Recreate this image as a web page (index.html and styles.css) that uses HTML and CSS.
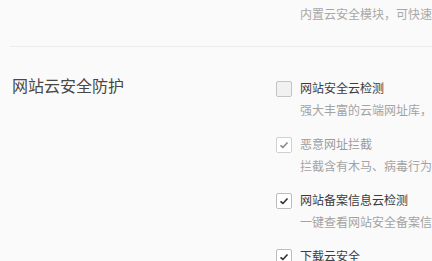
FILE: index.html
```html
<!DOCTYPE html>
<html lang="zh">
<head>
<meta charset="utf-8">
<link rel="stylesheet" href="styles.css">
</head>
<body>
<div class="page">
  <div class="top">
    <div class="desc top-desc">内置云安全模块，可快速识别恶意网址和下载文件</div>
  </div>
  <div class="divider"></div>
  <div class="section">
    <div class="heading">网站云安全防护</div>
    <div class="options">
      <div class="option">
        <div class="row">
          <span class="box"></span>
          <span class="title">网站安全云检测</span>
        </div>
        <div class="desc">强大丰富的云端网址库，实时检测网站安全</div>
      </div>
      <div class="option disabled">
        <div class="row">
          <span class="box checked"><svg viewBox="0 0 16 16" width="14" height="14"><path d="M4 8.3 L6.8 10.8 L12 5.2" fill="none" stroke="currentColor" stroke-width="1.9"/></svg></span>
          <span class="title">恶意网址拦截</span>
        </div>
        <div class="desc">拦截含有木马、病毒行为的恶意网址</div>
      </div>
      <div class="option">
        <div class="row">
          <span class="box checked"><svg viewBox="0 0 16 16" width="14" height="14"><path d="M4 8.3 L6.8 10.8 L12 5.2" fill="none" stroke="currentColor" stroke-width="1.9"/></svg></span>
          <span class="title">网站备案信息云检测</span>
        </div>
        <div class="desc">一键查看网站安全备案信息</div>
      </div>
      <div class="option">
        <div class="row">
          <span class="box checked"><svg viewBox="0 0 16 16" width="14" height="14"><path d="M4 8.3 L6.8 10.8 L12 5.2" fill="none" stroke="currentColor" stroke-width="1.9"/></svg></span>
          <span class="title">下载云安全</span>
        </div>
        <div class="desc">下载文件时自动检测安全性</div>
      </div>
    </div>
  </div>
</div>
</body>
</html>
```

FILE: styles.css
```css
html, body {
  margin: 0;
  padding: 0;
  background: #fafafa;
  overflow: hidden;
}
body {
  width: 432px;
  height: 261px;
  font-family: "Noto Sans CJK SC", "Noto Sans", sans-serif;
  white-space: nowrap;
}
.page {
  width: 432px;
  height: 261px;
  overflow: hidden;
}
.top {
  height: 46px;
  padding-left: 300px;
  padding-top: 5px;
  box-sizing: border-box;
}
.divider {
  margin-left: 10px;
  border-top: 1px solid #ececec;
}
.section {
  display: flex;
  padding-top: 27px;
  padding-left: 12px;
}
.heading {
  width: 264px;
  flex: none;
  font-size: 16px;
  line-height: 22px;
  color: #484848;
}
.options {
  padding-top: 6px;
  display: flex;
  flex-direction: column;
  gap: 17px;
}
.row {
  display: flex;
  align-items: center;
  gap: 8px;
  height: 16px;
}
.box {
  width: 14px;
  height: 14px;
  border: 1px solid #c4c4c4;
  border-radius: 2px;
  background: #f1f1f1;
  display: flex;
  align-items: center;
  justify-content: center;
  color: #333;
  flex: none;
  margin-top: 1px;
}
.box.checked {
  background: #fff;
  border-color: #bdbdbd;
}
.title {
  font-size: 12px;
  line-height: 16px;
  color: #3c3c3c;
}
.desc {
  font-size: 12px;
  line-height: 18px;
  color: #a3a3a3;
  margin-top: 5px;
  padding-left: 24px;
}
.top-desc {
  margin-top: 0;
  padding-left: 0;
  color: #a8a8a8;
}
.disabled .title {
  color: #9a9a9a;
}
.disabled .box {
  color: #8a8a8a;
  border-color: #d0d0d0;
}
```
